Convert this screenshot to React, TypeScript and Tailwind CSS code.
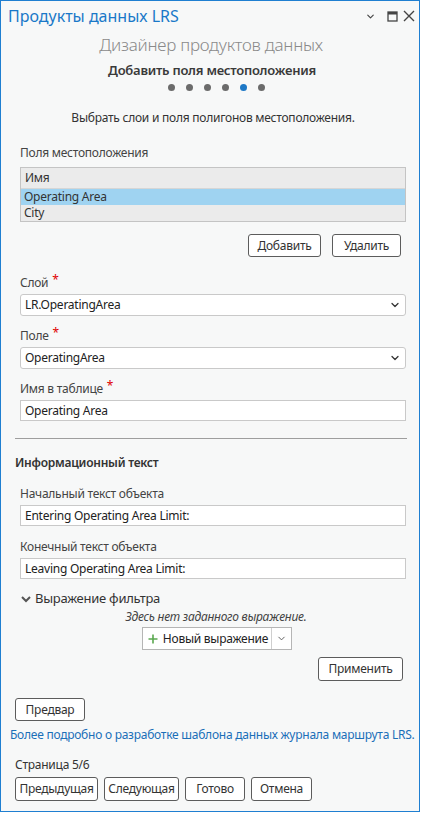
import { ChevronDown } from "lucide-react";

/* ─── Small building blocks ─── */

function Label({ text, required }: { text: string; required?: boolean }) {
  return (
    <div className="flex items-start h-[18px] text-[12px] text-[#444]">
      <span>{text}</span>
      {required && <span className="ml-[4px] text-[#e00000] text-[12px] leading-[12px]">*</span>}
    </div>
  );
}

function Select({ value }: { value: string }) {
  return (
    <div className="flex items-center justify-between h-[22px] rounded-[3px] border border-[#c9c9c9] bg-white pl-[4px] pr-[4px] text-[12px] text-[#222]">
      <span>{value}</span>
      <ChevronDown size={12} strokeWidth={2.5} className="text-[#333]" />
    </div>
  );
}

function TextInput({ value }: { value: string }) {
  return (
    <div className="flex items-center h-[21px] border border-[#c9c9c9] bg-white px-[4px] text-[12px] text-[#222]">
      {value}
    </div>
  );
}

function Button({ children, className = "" }: { children: React.ReactNode; className?: string }) {
  return (
    <button
      type="button"
      className={`h-[23px] rounded-[3px] border border-[#5c5c5c] bg-white text-[12px] text-[#333] flex items-center justify-center ${className}`}
    >
      {children}
    </button>
  );
}

/* ─── Main ─── */

export default function App() {
  const steps = [0, 1, 2, 3, 4, 5];

  return (
    <div
      className="w-[421px] h-[814px] bg-white tracking-[-0.25px]"
      style={{ fontFamily: '"Noto Sans", "Open Sans", sans-serif' }}
    >
      <div className="w-[420px] h-[812px] border border-[#1f7fd1] bg-[#f7f8f8] flex flex-col">
        {/* Title bar */}
        <div className="flex items-center h-[30px] pl-[7px] pr-[4px]">
          <span className="flex-1 text-[16px] text-[#1a78c8] tracking-normal">Продукты данных LRS</span>
          <div className="flex items-center text-[#444]">
            <ChevronDown size={11} strokeWidth={2.5} />
            <svg width="11" height="11" viewBox="0 0 11 11" className="ml-[11px]">
              <rect x="1" y="1" width="9" height="9" fill="none" stroke="#444" strokeWidth="1.3" />
              <rect x="1" y="1" width="9" height="2.5" fill="#444" />
            </svg>
            <svg width="12" height="12" viewBox="0 0 12 12" className="ml-[5px]">
              <path d="M1 1 L11 11 M11 1 L1 11" stroke="#444" strokeWidth="1.4" />
            </svg>
          </div>
        </div>

        {/* Header */}
        <div className="text-center text-[17px] font-light text-[#8a8a8a] leading-[26px] mt-[1px] ml-[2px]">
          Дизайнер продуктов данных
        </div>
        <div className="text-center text-[13px] font-semibold text-[#3a3a3a] mt-[2px] leading-[20px] ml-[4px]">
          Добавить поля местоположения
        </div>
        <div className="flex justify-center gap-[11px] mt-[4px] ml-[12px]">
          {steps.map((s) => (
            <span
              key={s}
              className={`w-[7px] h-[7px] rounded-full ${s === 4 ? "bg-[#1d78c6]" : "bg-[#6b6b6b]"}`}
            />
          ))}
        </div>

        <div className="text-center text-[12px] text-[#333] mt-[18px] ml-[6px]">
          Выбрать слои и поля полигонов местоположения.
        </div>

        {/* Location fields */}
        <div className="pl-[19px] pr-[13px] mt-[17px] flex flex-col">
          <Label text="Поля местоположения" />
          <div className="mt-[5px] border border-[#c4c4c4] bg-[#ebebeb] text-[12px] text-[#333]">
            <div className="h-[21px] flex items-center px-[4px] border-b border-[#d6d6d6]">Имя</div>
            <div className="h-[16px] flex items-center px-[3px] bg-[#9fd3f1]">Operating Area</div>
            <div className="h-[16px] flex items-center px-[3px]">City</div>
          </div>
          <div className="flex justify-end gap-[11px] mt-[12px] pr-[5px]">
            <Button className="w-[73px]">Добавить</Button>
            <Button className="w-[69px]">Удалить</Button>
          </div>

          <div className="mt-[17px]">
            <Label text="Слой" required />
          </div>
          <div className="mt-[2px]">
            <Select value="LR.OperatingArea" />
          </div>
          <div className="mt-[11px]">
            <Label text="Поле" required />
          </div>
          <div className="mt-[2px]">
            <Select value="OperatingArea" />
          </div>
          <div className="mt-[11px]">
            <Label text="Имя в таблице" required />
          </div>
          <div className="mt-[2px]">
            <TextInput value="Operating Area" />
          </div>
        </div>

        <div className="ml-[14px] mr-[12px] mt-[17px] h-px bg-[#9e9e9e]" />

        {/* Info text */}
        <div className="px-[14px] mt-[15px] text-[12px] font-semibold text-[#333]">
          Информационный текст
        </div>
        <div className="pl-[19px] pr-[13px] flex flex-col">
          <div className="mt-[13px]">
            <Label text="Начальный текст объекта" />
          </div>
          <div className="mt-[2px]">
            <TextInput value="Entering Operating Area Limit:" />
          </div>
          <div className="mt-[12px]">
            <Label text="Конечный текст объекта" />
          </div>
          <div className="mt-[2px]">
            <TextInput value="Leaving Operating Area Limit:" />
          </div>

          <div className="flex items-center mt-[10px] h-[20px]">
            <svg width="10" height="8" viewBox="0 0 10 8" className="mr-[4px] ml-[1px]">
              <path d="M1 2 L5 6 L9 2" fill="none" stroke="#555" strokeWidth="2" />
            </svg>
            <span className="text-[13px] text-[#333]">Выражение фильтра</span>
          </div>
          <div className="text-center italic text-[12px] text-[#444] leading-[16px] mt-[0px] ml-[6px]">
            Здесь нет заданного выражение.
          </div>
          <div className="flex justify-center mt-[2px] pl-[8px]">
            <div className="flex h-[23px] border border-[#b5b5b5] bg-white text-[12px] text-[#222]">
              <div className="flex items-center pl-[5px] pr-[3px] border-r border-[#cfcfcf]">
                <svg width="10" height="10" viewBox="0 0 10 10" className="mr-[5px]">
                  <path d="M5 0.5 V9.5 M0.5 5 H9.5" stroke="#5aa84f" strokeWidth="1.6" />
                </svg>
                Новый выражение
              </div>
              <div className="flex items-center px-[4px]">
                <ChevronDown size={11} strokeWidth={2} className="text-[#555]" />
              </div>
            </div>
          </div>
          <div className="flex justify-end mt-[7px] pr-[3px]">
            <Button className="w-[85px] h-[24px]">Применить</Button>
          </div>
        </div>

        {/* Footer */}
        <div className="px-[14px] mt-[17px]">
          <Button className="w-[70px]">Предвар</Button>
        </div>
        <div className="px-[9px] mt-[5px] text-[12px] text-[#1b6fb8] whitespace-nowrap">
          Более подробно о разработке шаблона данных журнала маршрута LRS.
        </div>
        <div className="px-[14px] mt-[12px] text-[12px] text-[#333]">Страница 5/6</div>
        <div className="flex gap-[6px] px-[14px] mt-[3px]">
          <Button className="w-[83px] h-[24px]">Предыдущая</Button>
          <Button className="w-[75px] h-[24px]">Следующая</Button>
          <Button className="w-[60px] h-[24px]">Готово</Button>
          <Button className="w-[61px] h-[24px]">Отмена</Button>
        </div>
      </div>
    </div>
  );
}
